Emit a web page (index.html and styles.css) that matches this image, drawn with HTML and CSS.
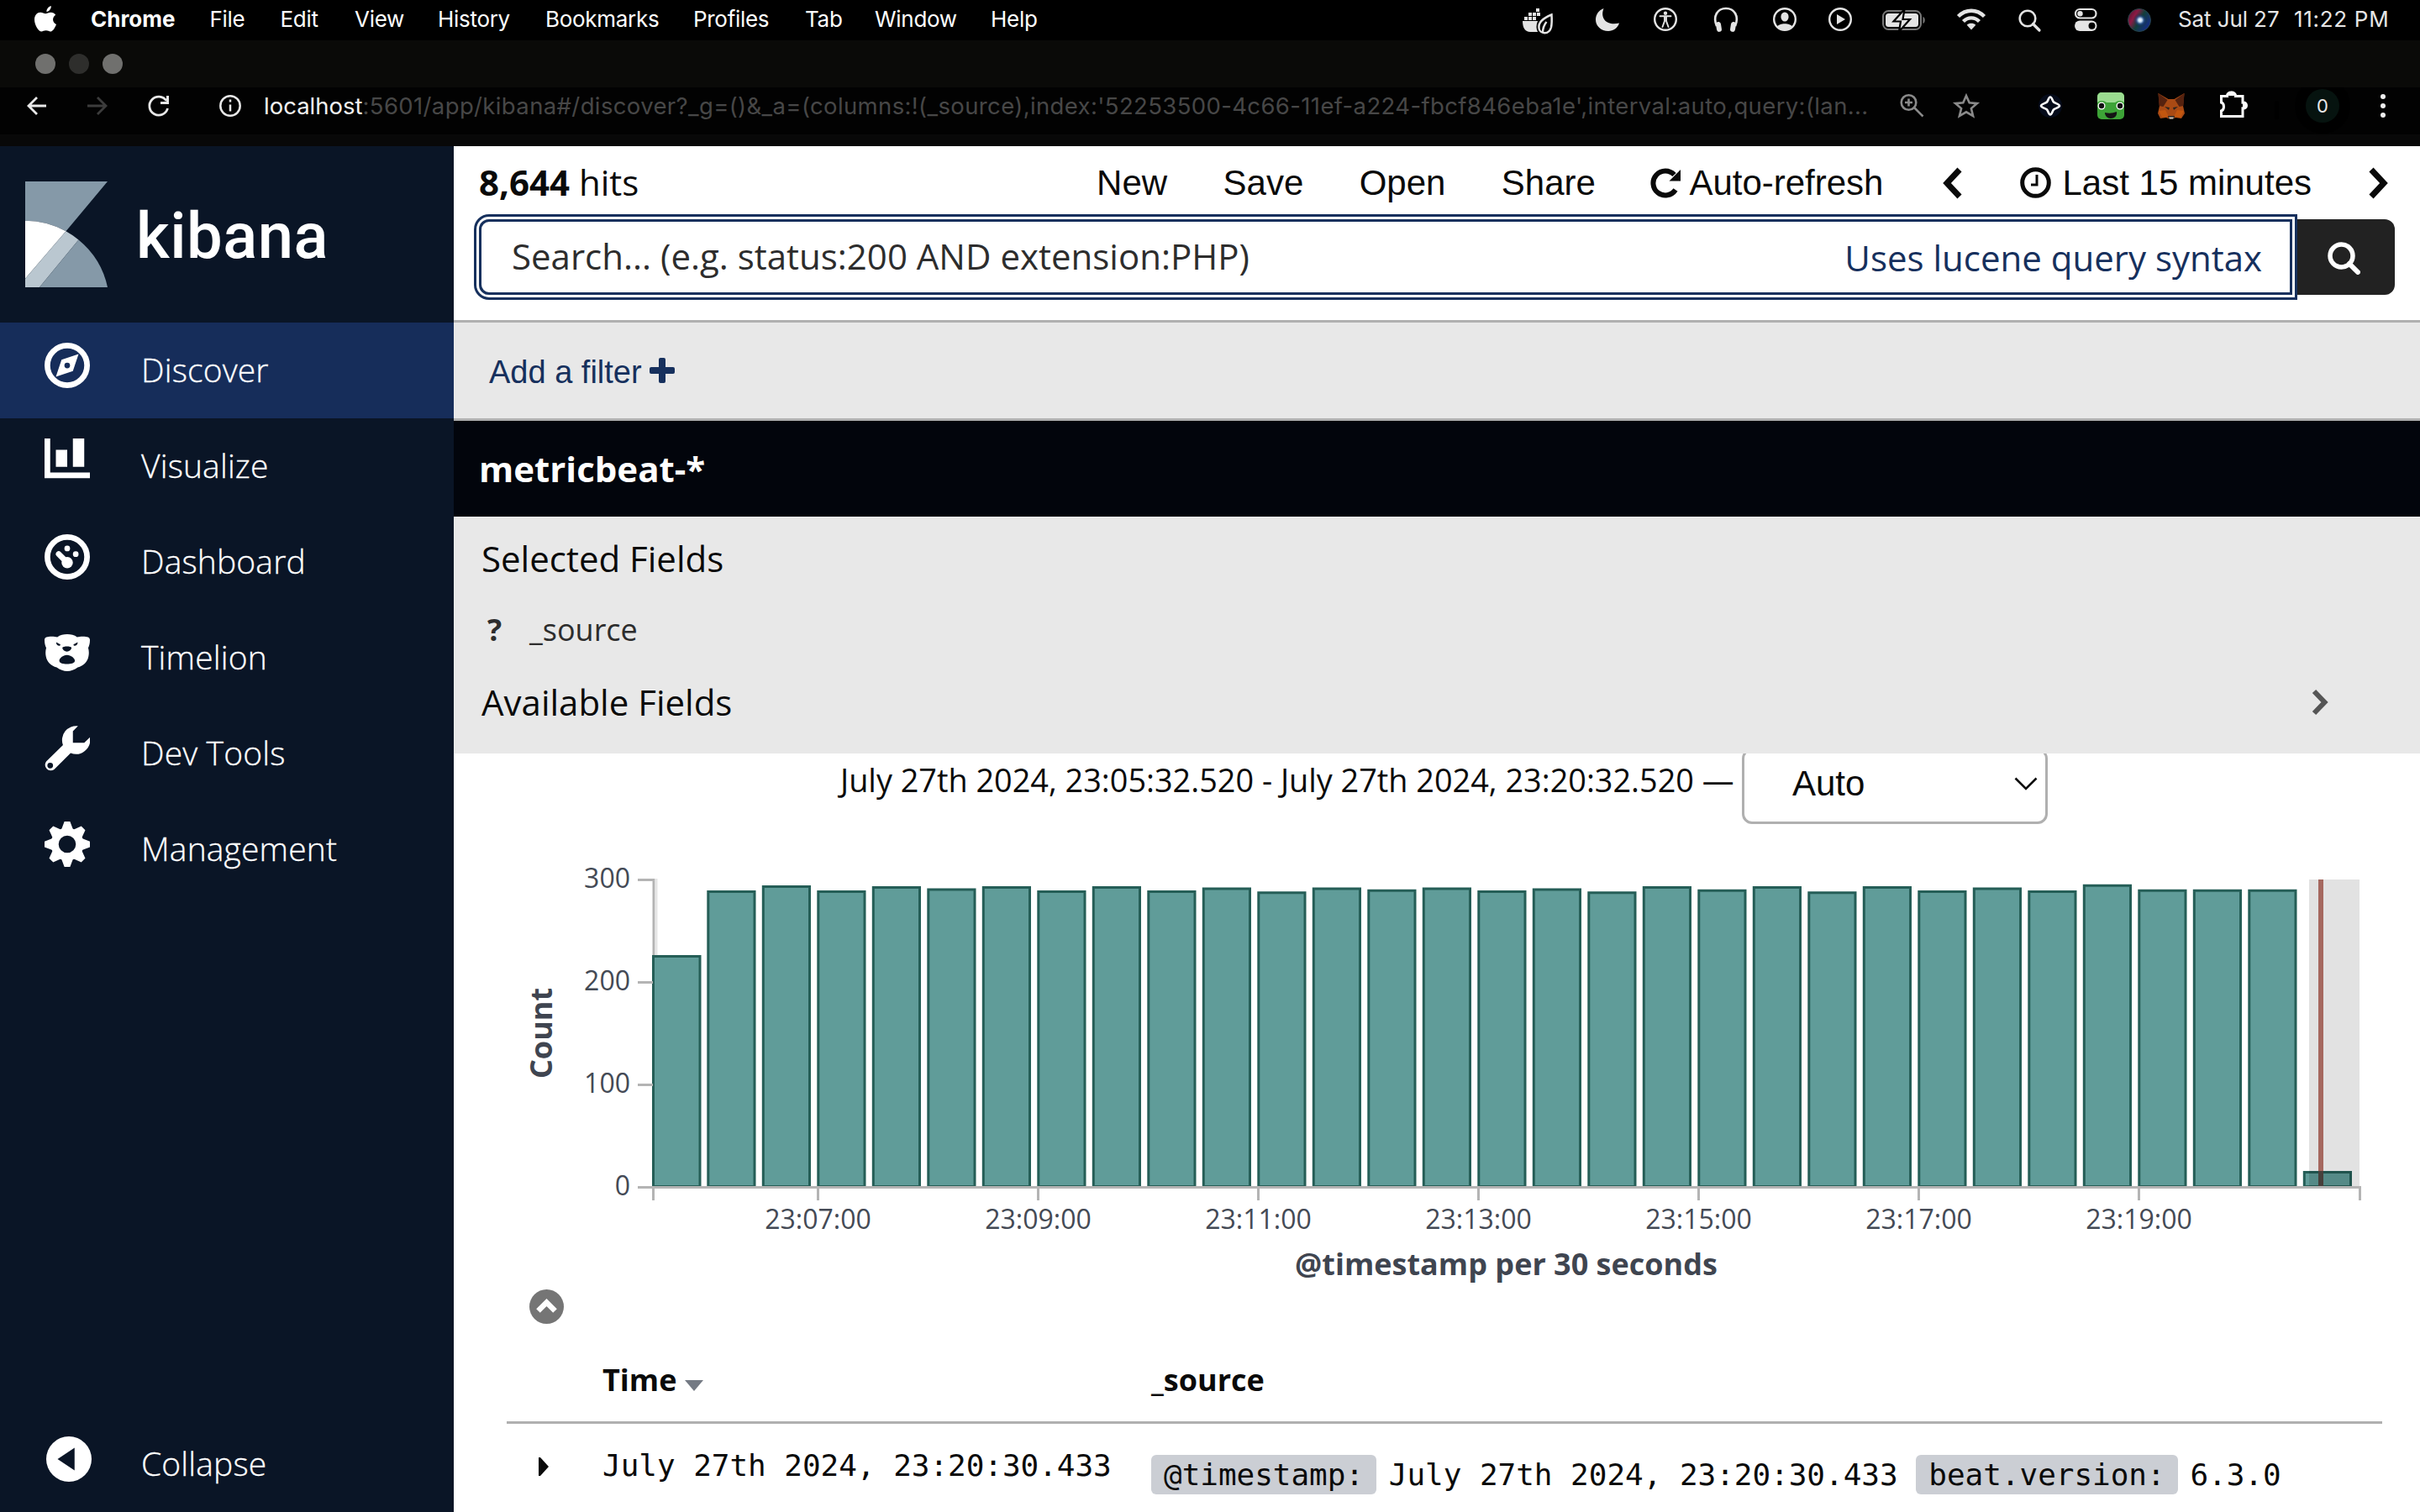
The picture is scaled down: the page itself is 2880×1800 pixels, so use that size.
FILE: index.html
```html
<!DOCTYPE html>
<html lang="en">
<head>
<meta charset="utf-8">
<title>Discover - Kibana</title>
<link rel="stylesheet" href="styles.css">
</head>
<body>
<header class="menubar">
  <svg class="apple" viewBox="0 0 108 48" width="108" height="48"><path fill="#fff" d="M55.500 14c-.3-3 2.200-6.300 5.300-7 .4 3.200-2.200 6.600-5.300 7zM60.500 14.800c2.300 0 4.400 1.200 5.700 3-4.600 2.900-3.900 9.200.8 11.100-1.500 4.200-4.300 8.600-7 8.600-1.900 0-2.700-1.200-5.300-1.200s-3.500 1.200-5.300 1.200c-3.700 0-8.400-8-8.400-14.300 0-5.400 3.400-8.500 7-8.500 2.500 0 4.500 1.600 6.200 1.600 1.600 0 3.800-1.500 6.300-1.500z"/></svg>
  <nav class="menus">
    <b class="m-chrome">Chrome</b><span class="m-file">File</span><span class="m-edit">Edit</span><span class="m-view">View</span><span class="m-history">History</span><span class="m-bookmarks">Bookmarks</span><span class="m-profiles">Profiles</span><span class="m-tab">Tab</span><span class="m-window">Window</span><span class="m-help">Help</span>
  </nav>
  <div class="status">
    <svg viewBox="1800 0 80 48" width="80" height="48"><g fill="#e4e4e4"><path d="M1812 25h18c-2 5-2 9 0 13h-9c-6 0-9-5-9-13z"/><path d="M1814 20h4v4h-4zM1819 20h4v4h-4zM1824 20h4v4h-4zM1819 15h4v4h-4zM1824 15h4v4h-4zM1829 15h4v4h-4zM1828 10h4v4h-4z"/></g><path d="M1846.500 17.500c-10 4-16 9-15 16 .7 7 12 8.500 14.500-1 .9-4.500.9-9 .5-15zM1836 39c0-6 2-10 4.500-13" fill="#000" stroke="#e4e4e4" stroke-width="2.500"/></svg>
    <svg viewBox="1880 0 70 48" width="70" height="48"><path fill="#e4e4e4" d="M1908.500 10c-5 13 5 21 18.500 17.500-2 6-7 9.500-13 9.500-8.500 0-15-6-15-13.500 0-6.500 4-11.500 9.500-13.500z"/></svg>
    <svg viewBox="1950 0 70 48" width="70" height="48"><circle cx="1982" cy="23" r="12.800" fill="none" stroke="#e4e4e4" stroke-width="2.400"/><circle cx="1982" cy="15.800" r="2.200" fill="#e4e4e4"/><path d="M1975.500 19.300h13M1981 20v5l-2.500 7M1983 20v5l2.500 7" fill="none" stroke="#e4e4e4" stroke-width="1.900" stroke-linecap="round"/></svg>
    <svg viewBox="2020 0 70 48" width="70" height="48"><path d="M2043 31c-5-12 1-21 11-21s16 9 11 21" fill="none" stroke="#e4e4e4" stroke-width="2.600"/><rect x="2042.500" y="26" width="6" height="12" rx="3" transform="rotate(-9 2045 32)" fill="#e4e4e4"/><rect x="2059.500" y="26" width="6" height="12" rx="3" transform="rotate(9 2063 32)" fill="#e4e4e4"/></svg>
    <svg viewBox="2090 0 70 48" width="70" height="48"><circle cx="2124" cy="23" r="12.800" fill="none" stroke="#e4e4e4" stroke-width="2.400"/><ellipse cx="2124" cy="20" rx="4.600" ry="5.600" fill="#e4e4e4"/><path d="M2115 32c2-5 16-5 18 0-5 5-13 5-18 0z" fill="#e4e4e4"/></svg>
    <svg viewBox="2160 0 70 48" width="70" height="48"><circle cx="2190" cy="23" r="12.800" fill="none" stroke="#e4e4e4" stroke-width="2.400"/><path d="M2186 17l10 6-10 6z" fill="#e4e4e4"/></svg>
    <svg viewBox="2230 0 80 48" width="80" height="48"><rect x="2241" y="13" width="45" height="22" rx="6.500" fill="none" stroke="#777" stroke-width="2"/><rect x="2244" y="16" width="39" height="16" rx="3.500" fill="#e4e4e4"/><path d="M2288.500 20c3 1 3 7 0 8z" fill="#777"/><path d="M2266.500 11l-13 14.500h8.500l-2 12 13-14.500h-8.500z" fill="#e4e4e4" stroke="#000" stroke-width="2.200"/></svg>
    <svg viewBox="2310 0 75 48" width="75" height="48"><g fill="none" stroke="#e4e4e4" stroke-width="4.400"><path d="M2330.500 19.500c9-9 22-9 31 0"/><path d="M2336.500 25.500c5.500-5.500 13.500-5.500 19 0"/></g><path d="M2346 35.500l-5.300-5.800c3-2.600 7.600-2.600 10.600 0z" fill="#e4e4e4"/></svg>
    <svg viewBox="2385 0 65 48" width="65" height="48"><circle cx="2413" cy="22" r="9.300" fill="none" stroke="#e4e4e4" stroke-width="2.600"/><path d="M2419.500 28.500l7.500 7.500" stroke="#e4e4e4" stroke-width="3.200" stroke-linecap="round"/></svg>
    <svg viewBox="2450 0 65 48" width="65" height="48"><rect x="2470" y="11" width="24.500" height="10.500" rx="5.200" fill="none" stroke="#e4e4e4" stroke-width="2.200"/><circle cx="2475.500" cy="16.200" r="3.200" fill="#e4e4e4"/><rect x="2469" y="24.500" width="26.500" height="12.500" rx="6.200" fill="#e4e4e4"/><circle cx="2489.500" cy="30.700" r="4" fill="#000"/></svg>
    <svg viewBox="2515 0 65 48" width="65" height="48"><defs><radialGradient id="siri"><stop offset="0" stop-color="#fff"/><stop offset=".28" stop-color="#b9d4ee"/><stop offset=".6" stop-color="#234a9a" stop-opacity=".5"/><stop offset="1" stop-color="#122" stop-opacity="0"/></radialGradient><linearGradient id="orb" x2="1" y2=".6"><stop offset="0" stop-color="#44142c"/><stop offset=".35" stop-color="#8c1a44"/><stop offset=".6" stop-color="#123f3a"/><stop offset="1" stop-color="#142d85"/></linearGradient></defs><circle cx="2546" cy="24" r="13.500" fill="url(#orb)" stroke="#27444a"/><circle cx="2547" cy="24" r="8.500" fill="url(#siri)"/></svg>
  </div>
  <time class="clock"><span class="date">Sat Jul 27</span><span class="hour">11:22 PM</span></time>
</header>
<div class="tabstrip"><i class="dot"></i><i class="dot dim"></i><i class="dot"></i></div>
<div class="toolbar">
  <svg viewBox="0 104 314 70" width="314" height="70" fill="none"><path d="M55 126H34M44 116l-10 10 10 10" stroke="#e8e8e8" stroke-width="2.800"/><path d="M104 126h21M116 116l10 10-10 10" stroke="#3c3c3c" stroke-width="2.800"/><path d="M198 120a11 11 0 1 0 1.500 9" stroke="#e8e8e8" stroke-width="2.800"/><path d="M201 114v10h-10v-3h7v-7z" fill="#e8e8e8"/><circle cx="274" cy="126" r="11.700" stroke="#e8e8e8" stroke-width="2.500"/><path d="M274 124.500v8M274 118.500v3" stroke="#e8e8e8" stroke-width="2.500"/></svg>
  <div class="url"><span class="host">localhost</span>:5601/app/kibana#/discover?_g=()&amp;_a=(columns:!(_source),index:'52253500-4c66-11ef-a224-fbcf846eba1e',interval:auto,query:(lan...</div>
  <svg viewBox="2240 104 640 70" width="640" height="70" fill="none">
    <g stroke="#8a8a8a" stroke-width="2.600"><circle cx="2271.500" cy="122" r="8.800"/><path d="M2278.500 128.500l10 10M2267 122h9M2271.500 117.500v9"/><path d="M2340 114l3.700 8.300 9.200.8-7 6 2.200 9-8.100-4.800-8.100 4.800 2.200-9-7-6 9.200-.8z"/></g>
    <circle cx="2440" cy="126" r="14" fill="#050b1a"/><path d="M2440 115.500c2 0 2.500 4.500 4 6 1.500 1.500 7 2.500 7 4.500s-5.500 3-7 4.500c-1.500 1.500-2 6-4 6s-2.500-4.500-4-6c-1.500-1.500-7-2.500-7-4.500s5.500-3 7-4.500c1.500-1.500 2-6 4-6z" stroke="#fff" stroke-width="2.600"/>
    <rect x="2496" y="110" width="32" height="32" rx="5" fill="#3da337"/><path d="M2496 122v-7a5 5 0 0 1 5-5h22a5 5 0 0 1 5 5v7c-6-4-9-1-11 0h-10c-3-2-7-3-11 0z" fill="#9bdc90"/><circle cx="2501" cy="126" r="4.500" fill="#fff"/><circle cx="2523" cy="126" r="4.500" fill="#fff"/><circle cx="2501" cy="126" r="3.200" fill="#111"/><circle cx="2523" cy="126" r="3.200" fill="#111"/><path d="M2505 134q7 2 14-1c1 5-3 8-7 8s-7-3-7-7z" fill="#141414"/>
    <path d="M2568.500 111l12 7h7l12-7-1.500 15 2 9-4 6-7-1-3 1.500h-5l-3-1.500-7 1-3-6 2-9z" fill="#a94a14"/><path d="M2568.500 111l11 8-5 8-5-1zM2599.500 111l-11 8 5 8 5-1z" fill="#55220f"/><path d="M2569 132l8-1 4 8-8 1zM2599 132l-8-1-4 8 8 1z" fill="#c2560f"/><path d="M2576 127l6 1-1 3zM2592 127l-6 1 1 3zM2580 138h8l-1 4h-6z" fill="#2b2420"/><path d="M2581 139.500h6l-1 2h-4z" fill="#cfc3b5"/>
    <path d="M2643.500 114.500h7c-1-6 11-6 10 0h8.500v7.500c6-1 6 8 0 7v9.500h-25.500v-6.500c4-1 4-9 0-10z" stroke="#fff" stroke-width="3"/><path d="M2652 114c0-7 8-7 8 0zM2669 122c7 0 7 8 0 8z" fill="#fff"/>
    <rect x="2707" y="120" width="5" height="22" rx="2.500" fill="#000"/><circle cx="2764" cy="126" r="33" fill="#000"/><circle cx="2764" cy="126" r="20" fill="#06130f"/>
    <text class="avatar" x="2764" y="134">0</text>
    <g fill="#eee"><circle cx="2836" cy="115" r="3"/><circle cx="2836" cy="126" r="3"/><circle cx="2836" cy="137" r="3"/></g>
  </svg>
</div>
<div class="app">
  <aside class="sidebar">
    <div class="brand">
      <svg viewBox="0 0 98 126" width="98" height="126"><path fill="#8599a8" d="M0 0H98L48.500 59.300A100 100 0 0 0 0 46.700Z"/><path fill="#fff" d="M0 46.700A100 100 0 0 1 48.500 59.300L0 115.700Z"/><path fill="#bac7d0" d="M48.500 59.300A100 100 0 0 1 63.500 69.500L17 126H0V115.700Z"/><path fill="#8599a8" d="M63.500 69.500A100 100 0 0 1 98 126H17Z"/></svg>
      <span class="wordmark">kibana</span>
    </div>
    <nav class="nav">
      <a class="item active"><svg class="ico" viewBox="0 0 16 16"><circle cx="8" cy="8" r="7" fill="none" stroke="#fff" stroke-width="2"/><path fill="#fff" fill-rule="evenodd" d="M12 4l-2 6-6 2 2-6zM8 7a1 1 0 1 0 0 2 1 1 0 0 0 0-2z"/></svg>Discover</a>
      <a class="item"><svg class="ico" viewBox="0 0 16 16"><path fill="#fff" d="M0 0h2v12h14v2H0zM4 4h4v6H4zM10 0h4v10h-4z"/></svg>Visualize</a>
      <a class="item"><svg class="ico" viewBox="0 0 16 16" fill="#fff"><circle cx="8" cy="8" r="7" fill="none" stroke="#fff" stroke-width="2"/><circle cx="8" cy="10" r="2"/><circle cx="8" cy="5" r="1"/><circle cx="11" cy="7" r="1"/><path d="M5 7l3 3" stroke="#fff" stroke-width="2" stroke-linecap="round"/></svg>Dashboard</a>
      <a class="item"><svg class="ico" viewBox="0 -1.500 16 16"><path fill="#fff" d="M0 2C0 1 1 .8 2.500.8 3.300.8 4 1 4.500 1 5.500.3 6.700 0 8 0s2.500.3 3.500 1c.5 0 1.200-.2 2-.2C15 .8 16 1 16 2c0 1.200-.2 2-.6 2.800.3 1 .3 2.200.1 3-.4 2-1.700 3.200-3.800 3.900C10.500 12.600 9.300 13 8 13s-2.500-.4-3.700-1.300C2.200 11 .9 9.800.5 7.800c-.2-.8-.2-2 .1-3C.2 4 0 3.200 0 2z"/><path fill="#0a1526" d="M4.100 2.800l1.500.8c0 .8-1.500.6-1.500-.8zM11.700 2.800l-1.500.8c0 .8 1.500.6 1.500-.8zM6.300 4.700c.3-.6 3-.6 3.200 0C9.500 5.400 8.700 6.100 7.900 6.100s-1.600-.7-1.600-1.400zM7.900 7.300c1.400 0 2.800 1.200 2.800 2 0 .9-1.400 1.200-2.800 1.200s-2.700-.3-2.700-1.200c0-.8 1.300-2 2.700-2z"/></svg>Timelion</a>
      <a class="item"><svg class="ico" viewBox="0 0 16 16"><path fill="#fff" fill-rule="evenodd" d="M11.800.1L10 1.900V6h4l2-1.900A5 5 0 0 1 9.200 9.600L3.400 15.400A2 2 0 0 1 .6 12.600L6.500 6.800A5 5 0 0 1 11.800.1ZM2 13a1 1 0 1 0 0 2 1 1 0 0 0 0-2z"/></svg>Dev Tools</a>
      <a class="item"><svg class="ico" viewBox="0 0 16 16" fill="#fff"><circle cx="8" cy="8" r="4.400" fill="none" stroke="#fff" stroke-width="2.700"/><g id="t"><path id="tooth" d="M7 0h2l1.200 3.200H5.800z"/><use href="#tooth" transform="rotate(45 8 8)"/><use href="#tooth" transform="rotate(90 8 8)"/><use href="#tooth" transform="rotate(135 8 8)"/></g><use href="#t" transform="rotate(180 8 8)"/></svg>Management</a>
    </nav>
    <a class="item collapse"><svg class="ico" viewBox="0 0 16 16"><path fill="#fff" fill-rule="evenodd" d="M8 0a8 8 0 1 0 0 16A8 8 0 0 0 8 0zM10 4v8L4 8z"/></svg>Collapse</a>
  </aside>
  <main class="main">
    <section class="kuery">
      <div class="topnav">
        <span class="hits"><b>8,644</b> hits</span>
        <a>New</a><a>Save</a><a>Open</a><a>Share</a>
        <a class="withicon"><svg viewBox="0 0 36 36" width="36" height="36"><path d="M30 26A14.500 14.500 0 1 1 28.500 8" fill="none" stroke="#0a0a0a" stroke-width="6"/><path d="M36 2v13.500H22.500z" fill="#0a0a0a"/></svg>Auto-refresh</a>
        <a class="chev prev"><svg viewBox="0 0 25 38" width="25" height="38"><path d="M21 3L6 19l15 16" fill="none" stroke="#0a0a0a" stroke-width="7"/></svg></a>
        <a class="withicon clockicon"><svg viewBox="0 0 37 37" width="37" height="37" fill="none" stroke="#0a0a0a"><circle cx="18.500" cy="18.500" r="15.800" stroke-width="5"/><path d="M20 9v12h-7" stroke-width="3"/></svg>Last 15 minutes</a>
        <a class="chev"><svg viewBox="0 0 25 38" width="25" height="38"><path d="M4 3l15 16L4 35" fill="none" stroke="#0a0a0a" stroke-width="7"/></svg></a>
      </div>
      <div class="search">
        <div class="field"><span class="placeholder">Search... (e.g. status:200 AND extension:PHP)</span><a class="syntax">Uses lucene query syntax</a></div>
        <button class="go"><svg viewBox="0 0 39 39" width="39" height="39" fill="none" stroke="#fff"><circle cx="16.500" cy="16.500" r="13.500" stroke-width="5.500"/><path d="M26 26l10 10" stroke-width="6" stroke-linecap="round"/></svg></button>
      </div>
    </section>
    <section class="filters"><a class="addfilter"><span class="addlabel">Add a filter</span><svg viewBox="0 0 30 30" width="30" height="30"><path fill="#16305d" d="M13 0h4a2 2 0 0 1 2 2v9h9a2 2 0 0 1 2 2v4a2 2 0 0 1-2 2h-9v9a2 2 0 0 1-2 2h-4a2 2 0 0 1-2-2v-9H2a2 2 0 0 1-2-2v-4a2 2 0 0 1 2-2h9V2a2 2 0 0 1 2-2z"/></svg></a></section>
    <section class="pattern">metricbeat-*</section>
    <section class="fields">
      <h2 class="ftitle">Selected Fields</h2>
      <div class="fitem"><b class="ftype">?</b>_source</div>
      <div class="available"><h2 class="ftitle2">Available Fields</h2><svg viewBox="0 0 20 32" width="20" height="32"><path d="M3 3l12.500 13L3 29" fill="none" stroke="#555" stroke-width="6"/></svg></div>
    </section>
    <section class="histhead">
      <span class="range">July 27th 2024, 23:05:32.520 - July 27th 2024, 23:20:32.520 —</span>
      <div class="interval">Auto<svg viewBox="0 0 28 16" width="28" height="16"><path d="M1.500 1.500L14 14 26.500 1.500" fill="none" stroke="#0a0a0a" stroke-width="2.600"/></svg></div>
    </section>
    <svg class="chart" viewBox="540 981 2340 549" width="2340" height="549">
      <path d="M778 1046v366" stroke="#b4b4b4" stroke-width="3"/><path d="M781 1046v366" stroke="#e6e6e6" stroke-width="3"/>
      <path class="bars" d="M777.500 1412.500V1138.500h55.500V1412.500z"/>
      <path class="bars" d="M842.800 1412.500V1061.500h55.200V1412.500zm65.500 0V1055.500h55.200V1412.500zm65.500 0V1061.500h55.200V1412.500zm65.500 0V1056.500h55.200V1412.500zm65.500 0V1059h55.200V1412.500zm65.500 0V1056.500h55.200V1412.500zm65.500 0V1061.500h55.200V1412.500zm65.500 0V1056.500h55.200V1412.500zm65.500 0V1061.500h55.200V1412.500zm65.500 0V1058h55.200V1412.500zm65.500 0V1062.700h55.200V1412.500zm65.500 0V1058h55.200V1412.500zm65.500 0V1060.200h55.200V1412.500zm65.500 0V1058h55.200V1412.500zm65.500 0V1061.500h55.200V1412.500zm65.500 0V1059h55.200V1412.500zm65.500 0V1062.700h55.200V1412.500zm65.500 0V1056.500h55.200V1412.500zm65.500 0V1060.200h55.200V1412.500zm65.500 0V1056.500h55.200V1412.500zm65.500 0V1062.700h55.200V1412.500zm65.500 0V1056.500h55.200V1412.500zm65.500 0V1061.500h55.200V1412.500zm65.500 0V1058h55.200V1412.500zm65.500 0V1061.500h55.200V1412.500zm65.500 0V1054.200h55.200V1412.500zm65.500 0V1060.200h55.200V1412.500zm65.500 0V1060.200h55.200V1412.500zm65.500 0V1060.200h55.200V1412.500zm65.500 0V1395.500h55.200V1412.500z"/>
      <rect x="2748" y="1047" width="60" height="365" fill="#000" fill-opacity=".113"/>
      <path d="M2762 1047v365" stroke="#a5685f" stroke-width="6"/><path d="M2762 1394v18" stroke="#473f3b" stroke-width="6"/>
      <g stroke="#b4b4b4" stroke-width="3"><path d="M759 1047.500h20M759 1169.500h18M759 1291.500h18M759 1413.500h2051"/><path d="M777.500 1415v14M973.500 1415v14M1235.500 1415v14M1497.500 1415v14M1759.500 1415v14M2021.500 1415v14M2283.500 1415v14M2545.500 1415v14M2808.500 1415v14"/></g>
      <g class="tick end"><text x="750" y="1057">300</text><text x="750" y="1179">200</text><text x="750" y="1301">100</text><text x="750" y="1423">0</text></g>
      <g class="tick mid"><text x="973.500" y="1463">23:07:00</text><text x="1235.500" y="1463">23:09:00</text><text x="1497.500" y="1463">23:11:00</text><text x="1759.500" y="1463">23:13:00</text><text x="2021.500" y="1463">23:15:00</text><text x="2283.500" y="1463">23:17:00</text><text x="2545.500" y="1463">23:19:00</text></g>
      <text class="axis" x="1792.500" y="1518">@timestamp per 30 seconds</text>
      <text class="axis" transform="translate(657 1230) rotate(-90)">Count</text>
    </svg>
    <div class="toggle"><svg viewBox="0 0 41 41" width="41" height="41"><circle cx="20.500" cy="20.500" r="20.500" fill="#757575"/><path d="M10.500 25.500l10-10 10 10" fill="none" stroke="#fff" stroke-width="6.500"/></svg></div>
    <section class="docs">
      <div class="row head"><span></span><span>Time<svg class="caret" viewBox="0 0 22 13" width="22" height="13"><path fill="#747a84" d="M0 0h22L11 13z"/></svg></span><span>_source</span></div>
      <div class="row"><span class="expand"><svg viewBox="0 0 12 22" width="12" height="22"><path d="M0 0h2l10 11L2 22H0z" fill="#0a0a0a"/></svg></span><span class="mono">July 27th 2024, 23:20:30.433</span><span class="source"><span class="tag">@timestamp:</span><span class="val">July 27th 2024, 23:20:30.433</span><span class="tag second">beat.version:</span><span class="val">6.3.0</span></span></div>
    </section>
  </main>
</div>
</body>
</html>
```
FILE: styles.css
```css
* { box-sizing: border-box; }
body { margin: 0; width: 2880px; height: 1800px; overflow: hidden; background: #fff; font-family: "Open Sans", "Noto Sans", sans-serif; color: #0a0a0a; }
svg { display: block; flex: none; }

.menubar { display: flex; height: 48px; background: #000; color: #fff; font: 26px/46px Inter, sans-serif; white-space: nowrap; }
.menus { display: flex; width: 1692px; }
.menus > * { flex: none; }
.m-chrome { width: 141.5px; letter-spacing: 0; }
.m-file { width: 84px; }
.m-edit { width: 88.5px; }
.m-view { width: 99px; }
.m-history { width: 128px; }
.m-bookmarks { width: 176px; }
.m-profiles { width: 133px; }
.m-tab { width: 83px; }
.m-window { width: 138px; }
.menus span { letter-spacing: -.3px; }
.status { display: flex; width: 792px; }
.clock { display: flex; color: #e6e6e6; }
.date { width: 138px; letter-spacing: -.1px; }
.hour { letter-spacing: .7px; }

.tabstrip { display: flex; gap: 16px; height: 56px; padding: 16px 42px; background: #0a0a08; }
.dot { width: 24px; height: 24px; border-radius: 50%; background: #70706e; }
.dot.dim { background: #2e2e2c; }

.toolbar { display: flex; height: 70px; background: linear-gradient(#020202 56px, #080808 56px); }
.url { width: 1926px; flex: none; font: 27.5px/44px Inter, sans-serif; letter-spacing: .37px; color: #474747; white-space: nowrap; }
.host { color: #f2f2f2; letter-spacing: 0; }
.avatar { font: 22px Inter, sans-serif; fill: #e8e8e8; text-anchor: middle; }

.app { display: flex; height: 1626px; }
.sidebar { display: flex; flex-direction: column; width: 540px; flex: none; background: #0a1526; color: #fff; }
.brand { display: flex; gap: 34px; height: 210px; padding: 42px 30px; }
.wordmark { font: 500 76px/130px Roboto, sans-serif; letter-spacing: .5px; }
.nav { flex: 1; }
.item { display: flex; height: 114px; font-size: 39px; line-height: 112px; font-weight: 300; letter-spacing: .15px; -webkit-text-stroke: .3px #fff; }
.item.active { background: #162d5a; }
.ico { width: 54px; height: 54px; margin: 24px 61px 0 53px; }
.collapse .ico { margin: 24px 59px 0 55px; }

.main { flex: 1; min-width: 0; display: flex; flex-direction: column; }
.main > * { flex: none; }
.kuery { height: 210px; border-bottom: 3px solid #b0b0b0; }
.topnav { display: flex; height: 87px; padding: 0 37px 0 30px; font: 42px/87px "Liberation Sans", Arial, sans-serif; white-space: nowrap; }
.topnav a + a { margin-left: 66.4px; }
.topnav a + .withicon { margin-left: 65.5px; }
.topnav a + .clockicon { margin-left: 68px; }
.hits { margin-right: auto; font-family: "Open Sans", sans-serif; line-height: 86px; }
.withicon { display: flex; align-items: center; gap: 10px; }
.clockicon { gap: 13px; }
.topnav a + .chev { display: flex; align-items: center; margin-left: 67px; }
.topnav a + .prev { margin-left: 70px; }
.search { display: flex; height: 90px; padding: 0 30px; }
.field { position: relative; display: flex; justify-content: space-between; width: 2158px; border: 3px solid #16305d; border-radius: 12px 0 0 12px; box-shadow: 0 0 0 3px #fff, 0 0 0 6px #16305d; padding: 0 33px 0 36px; font-size: 42px; line-height: 84px; white-space: nowrap; }
.placeholder { line-height: 82px; color: #2d2d2d; }
.syntax { line-height: 85px; color: #16305d; }
.go { display: flex; align-items: center; justify-content: center; width: 122px; padding: 3px 0 0 0; border: 0; border-radius: 0 12px 12px 0; background: #222; }
.filters { height: 117px; border-bottom: 3px solid #b0b0b0; background: #e8e8e8; padding-left: 42px; }
.addfilter { display: flex; align-items: center; gap: 9px; height: 114px; font: 38px/110px "Liberation Sans", Arial, sans-serif; color: #16305d; }
.addlabel { padding-top: 4px; }
.pattern { height: 114px; background: #02050c; color: #fff; padding-left: 30px; font-size: 42px; line-height: 113px; font-weight: 700; }
.fields { height: 282px; background: #e8e8e8; padding-left: 33px; }
.ftitle, .ftitle2 { margin: 0; font-size: 42px; font-weight: 400; line-height: 99px; }
.ftitle2 { line-height: 103px; }
.fitem { display: flex; height: 70px; font-size: 36px; line-height: 72px; color: #2d2d2d; }
.ftype { width: 57px; padding-left: 7px; }
.available { display: flex; justify-content: space-between; align-items: center; padding-right: 109px; }
.histhead { display: flex; height: 84px; padding-left: 460px; overflow: hidden; font-size: 37.85px; line-height: 63px; white-space: nowrap; }
.range { width: 1073px; flex: none; }
.interval { display: flex; justify-content: space-between; align-items: center; width: 364px; height: 90px; margin-top: -6px; padding: 0 9px 6px 57px; border: 3px solid #b0b0b0; border-radius: 12px; font: 42px/80px "Liberation Sans", Arial, sans-serif; }

.bars { fill: #609c99; stroke: #255e57; stroke-width: 3px; }
.tick { font-size: 32px; fill: #444a55; }
.end { text-anchor: end; }
.mid { text-anchor: middle; }
.axis { font-size: 36px; font-weight: 700; fill: #3f4550; text-anchor: middle; }

.toggle { height: 62px; padding: 5px 0 0 90px; }
.docs { margin: 0 45px 0 63px; }
.row { display: grid; grid-template-columns: 114px 653px 1fr; font-size: 36px; line-height: 100px; white-space: nowrap; }
.head { height: 103px; line-height: 102px; font-weight: 700; border-bottom: 3px solid #b0b0b0; }
.caret { display: inline-block; margin-left: 10px; }
.expand { padding: 40px 0 0 38px; }
.mono, .source { font-family: "DejaVu Sans Mono", monospace; letter-spacing: -.04px; }
.source { display: flex; padding-top: 37px; gap: 14.8px; line-height: 47px; }
.tag { height: 47px; padding: 0 15px; border-radius: 6px; background: #cbced4; }
.second { margin-left: 7px; }
```
